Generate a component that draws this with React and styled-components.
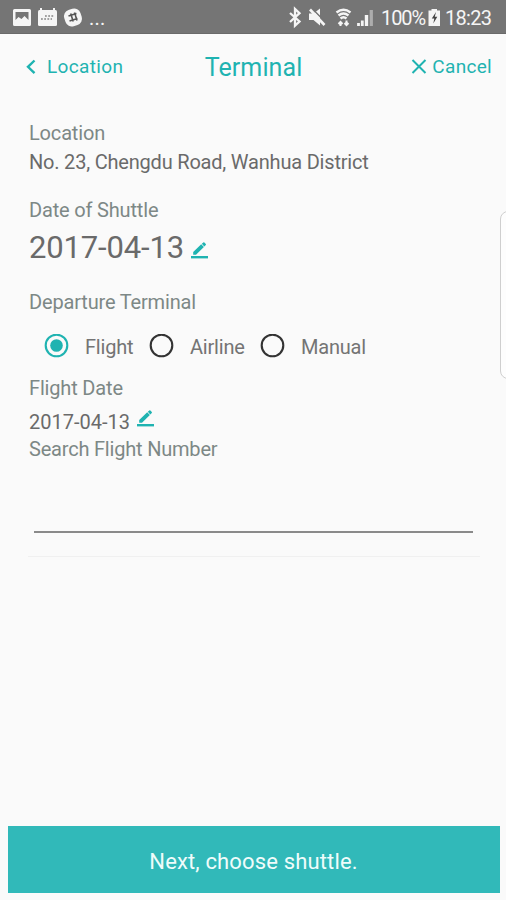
import React, { useState } from 'react';
import styled, { createGlobalStyle } from 'styled-components';

const teal = '#1fb3b1';

const GlobalStyle = createGlobalStyle`
  * {
    box-sizing: border-box;
  }
  body {
    margin: 0;
    background: #fafafa;
    font-family: Roboto, 'Liberation Sans', sans-serif;
  }
`;

// styled-components
const Screen = styled.div`
  position: relative;
  display: flex;
  flex-direction: column;
  width: 506px;
  height: 900px;
  overflow: hidden;
  background: #fafafa;
`;

const StatusBar = styled.div`
  display: flex;
  justify-content: space-between;
  height: 34px;
  padding: 0 14px 0 12px;
  background: #757575;
  border-bottom: 1px solid #6a6a6a;
  color: #f5f5f5;
`;

const StatusText = styled.span`
  width: ${props => props.$width};
  font-size: 20px;
  line-height: 36px;
  letter-spacing: ${props => props.$spacing || '0'};
  white-space: nowrap;
`;

const StatusIcons = styled.svg`
  display: block;
  height: 34px;
`;

const StatusGroup = styled.div`
  display: flex;
`;

const Header = styled.header`
  display: grid;
  grid-template-columns: 1fr auto 1fr;
  align-items: center;
  height: 66px;
  padding: 0 14px 0 25px;
  color: ${teal};
`;

const HeaderButton = styled.button`
  display: flex;
  align-items: center;
  justify-self: ${props => props.$side};
  gap: ${props => props.$gap};
  padding: 0;
  border: 0;
  background: none;
  color: inherit;
  font: inherit;
  font-size: 19px;
  line-height: 24px;
  letter-spacing: ${props => props.$spacing};
`;

const Title = styled.h1`
  margin: 2px 10px 0 0;
  font-size: 25px;
  font-weight: 400;
  line-height: 32px;
  letter-spacing: 0.1px;
`;

const Content = styled.main`
  display: flex;
  flex: 1;
  flex-direction: column;
  padding: 21px 26px 0 29px;
`;

const Field = styled.section`
  display: flex;
  flex-direction: column;
  gap: ${props => props.$gap};
  margin-bottom: ${props => props.$bottom};
`;

const Label = styled.div`
  color: #7d8886;
  font-size: 20px;
  line-height: 24px;
  letter-spacing: ${props => props.$spacing || '-0.17px'};
`;

const Value = styled.div`
  display: flex;
  align-items: flex-start;
  color: #6a6a6a;
  font-size: ${props => (props.$large ? '31px' : '20px')};
  line-height: ${props => (props.$large ? '36px' : '24px')};
  letter-spacing: ${props => props.$spacing || '0'};
`;

const EditButton = styled.button`
  display: flex;
  margin: ${props => props.$margin};
  padding: 0;
  border: 0;
  background: none;
`;

const RadioGroup = styled.div`
  display: grid;
  grid-template-columns: 105px 111px auto;
  align-items: center;
  height: 24px;
  padding-left: 15px;
`;

const RadioOption = styled.label`
  display: flex;
  align-items: center;
  gap: 16px;
  color: #747474;
  font-size: 20px;
  line-height: 24px;
  letter-spacing: -0.2px;
`;

const HiddenRadio = styled.input`
  position: absolute;
  opacity: 0;
  pointer-events: none;
`;

const FlightInput = styled.input`
  height: 72px;
  margin: 0 7px 0 5px;
  padding: 0;
  border: 0;
  border-bottom: 2px solid #8a8a8a;
  outline: none;
  background: transparent;
  color: #666;
  font: inherit;
  font-size: 20px;
`;

const Divider = styled.hr`
  width: 452px;
  height: 1px;
  margin: 23px 0 0 -1px;
  border: 0;
  background: #f0f0f0;
`;

const EdgeHandle = styled.div`
  position: absolute;
  top: 211px;
  right: -12px;
  width: 18px;
  height: 168px;
  border: 1px solid #cfcfcf;
  border-radius: 8px;
  background: #fdfdfd;
`;

const NextButton = styled.button`
  height: 67px;
  margin: 0 6px 7px 8px;
  padding: 3px 1px 0 0;
  border: 0;
  background: #31b9b9;
  color: #effcfb;
  font: inherit;
  font-size: 22px;
  letter-spacing: 0.15px;
`;
// end styled-components

const NotificationIcons = () => (
  <StatusIcons width="77" viewBox="12 0 77 34" fill="#f5f5f5">
    <path fillRule="evenodd" d="M14.5 9h15a1.5 1.5 0 0 1 1.5 1.5v14a1.5 1.5 0 0 1-1.5 1.5h-15a1.5 1.5 0 0 1-1.5-1.5v-14A1.5 1.5 0 0 1 14.5 9zM15.5 12v8l3-3 3 2 3-3 4 4v-8z" />
    <path d="M41 8v3M54 8v3" stroke="#f5f5f5" strokeWidth="2" />
    <rect x="38" y="10" width="19" height="16" rx="1.5" />
    <path d="M45 16h9M41 19h11" stroke="#858585" strokeWidth="1.7" strokeDasharray="1.8 1.4" />
    <rect x="64.5" y="9" width="17" height="17" rx="6.5" transform="rotate(-18 73 17.5)" />
    <path d="M68.5 16l8-2.500M69.500 21l8-2.500M70.700 13.500l2.500 8M74.500 12.500l2.500 8" stroke="#555" strokeWidth="1.600" />
  </StatusIcons>
);

const SystemIcons = () => (
  <StatusIcons width="93" viewBox="288 0 93 34" fill="none" stroke="#f5f5f5">
    <path d="M290 13l9.5 8.5-4.5 4.2V9l4.500 4.200L290 22" strokeWidth="2.300" />
    <path d="M309 13.500h4.500l6.500-5v17l-6.500-5.500H309z" fill="#f5f5f5" stroke="none" />
    <path d="M312 8.500l13.500 13.500" stroke="#757575" strokeWidth="1.500" />
    <path d="M310 9.500l14.500 15.500" strokeWidth="2.600" />
    <path d="M336.500 12.500q7-5.500 14 0M338.500 15.500q5-4 10 0M340.500 18.500q3-2.500 6 0" strokeWidth="2.400" />
    <path d="M340.500 26v-3.500M338.500 24l2-2 2 2M346.500 20.500v4M344.500 23l2 2 2-2" strokeWidth="2" />
    <path d="M358.500 26v-3M362.300 26v-5.500" strokeWidth="2.800" />
    <path d="M366.500 26V15" strokeWidth="3.400" />
    <path d="M371.300 26V10" stroke="#adadad" strokeWidth="3.200" />
  </StatusIcons>
);

const BatteryIcon = () => (
  <StatusIcons width="19" viewBox="426 0 19 34">
    <path d="M431.500 9h5.500v1.500h3V26h-11.500V10.500h3z" fill="#f5f5f5" />
    <path d="M436 12l-4.200 6.500h2.500l-1 5 4-6.800h-2.500z" fill="#444" />
  </StatusIcons>
);

const PencilIcon = () => (
  <svg width="17" height="17" viewBox="0 0 17 17" fill={teal}>
    <path d="M2.200 12.800v-2.800l8-7.800 2.700 2.700-7.900 7.900zM10.800 1.800L12.300.4q.6-.4 1.100.1l1.400 1.400q.4.500 0 1l-1.500 1.500z" />
    <rect x="0" y="14" width="17" height="2.400" />
  </svg>
);

const RadioIcon = ({ checked }) => (
  <svg width="25" height="25" viewBox="0 0 25 25" fill="none">
    <circle cx="12.5" cy="11.5" r="10.800" stroke={checked ? teal : '#333'} strokeWidth="2.100" />
    {checked && <circle cx="12.5" cy="11.5" r="6.300" fill={teal} />}
  </svg>
);

const options = ['Flight', 'Airline', 'Manual'];

const App = () => {

    const [terminalType, setTerminalType] = useState('Flight');
    const [flightNumber, setFlightNumber] = useState('');

    const handleChange = event => {
        setTerminalType(event.target.value);
    };

    return (
        <Screen>
            <GlobalStyle />
            <StatusBar>
                <StatusGroup>
                    <NotificationIcons />
                    <StatusText $spacing='0.2px'>...</StatusText>
                </StatusGroup>
                <StatusGroup>
                    <SystemIcons />
                    <StatusText $width='45px' $spacing='-1.1px'>100%</StatusText>
                    <BatteryIcon />
                    <StatusText $width='47px' $spacing='-0.7px'>18:23</StatusText>
                </StatusGroup>
            </StatusBar>

            <Header>
                <HeaderButton $side='start' $gap='9px' $spacing='0.35px'>
                    <svg width="13" height="16" viewBox="0 0 13 16" fill="none" stroke={teal} strokeWidth="2.4">
                        <path d="M9.5 1.500L3 7.800l6.500 6.300" />
                    </svg>
                    Location
                </HeaderButton>
                <Title>Terminal</Title>
                <HeaderButton $side='end' $gap='5px' $spacing='0.3px'>
                    <svg width="16" height="16" viewBox="0 0 16 16" fill="none" stroke={teal} strokeWidth="2">
                        <path d="M1.500 1l13 13M14.500 1l-13 13" />
                    </svg>
                    Cancel
                </HeaderButton>
            </Header>

            <Content>
                <Field $gap='5px' $bottom='24px'>
                    <Label>Location</Label>
                    <Value $spacing='-0.2px'>No. 23, Chengdu Road, Wanhua District</Value>
                </Field>

                <Field $gap='8px' $bottom='24px'>
                    <Label>Date of Shuttle</Label>
                    <Value $large $spacing='-0.15px'>
                        2017-04-13
                        <EditButton $margin='12px 0 0 7px' aria-label='Edit shuttle date'><PencilIcon /></EditButton>
                    </Value>
                </Field>

                <Field $gap='20px' $bottom='18px'>
                    <Label>Departure Terminal</Label>
                    <RadioGroup>
                        {options.map(option => (
                            <RadioOption key={option}>
                                <HiddenRadio
                                    type='radio'
                                    name='terminalType'
                                    value={option}
                                    checked={terminalType === option}
                                    onChange={handleChange}
                                />
                                <RadioIcon checked={terminalType === option} />
                                {option}
                            </RadioOption>
                        ))}
                    </RadioGroup>
                </Field>

                <Field $gap='10px' $bottom='3px'>
                    <Label>Flight Date</Label>
                    <Value>
                        2017-04-13
                        <EditButton $margin='0 0 0 7px' aria-label='Edit flight date'><PencilIcon /></EditButton>
                    </Value>
                </Field>

                <Label as='label' htmlFor='flightNumber' $spacing='-0.2px'>Search Flight Number</Label>
                <FlightInput
                    id='flightNumber'
                    type='text'
                    value={flightNumber}
                    onChange={event => setFlightNumber(event.target.value)}
                />
                <Divider />
            </Content>

            <EdgeHandle />
            <NextButton>Next, choose shuttle.</NextButton>
        </Screen>
    )
}

export default App;
